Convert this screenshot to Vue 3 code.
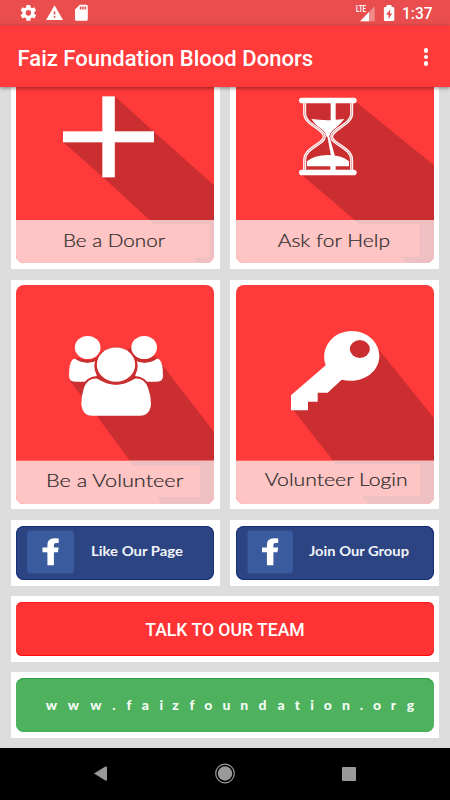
<template>
    <div class="screen">
        <div class="status-bar">
            <svg class="status-icons" viewBox="0 0 450 26">
                <g fill="#fff">
                    <path transform="translate(18.9 3.4) scale(.79)" d="M19.43 12.98c.04-.32.07-.64.07-.98s-.03-.66-.07-.98l2.11-1.65c.19-.15.24-.42.12-.64l-2-3.46c-.12-.22-.39-.3-.61-.22l-2.49 1c-.52-.4-1.08-.73-1.69-.98l-.38-2.65C14.46 2.18 14.25 2 14 2h-4c-.25 0-.46.18-.49.42l-.38 2.65c-.61.25-1.17.59-1.69.98l-2.49-1c-.23-.09-.49 0-.61.22l-2 3.46c-.13.22-.07.49.12.64l2.11 1.65c-.04.32-.07.65-.07.98s.03.66.07.98l-2.11 1.65c-.19.15-.24.42-.12.64l2 3.46c.12.22.39.3.61.22l2.49-1c.52.4 1.08.73 1.69.98l.38 2.65c.03.24.24.42.49.42h4c.25 0 .46-.18.49-.42l.38-2.65c.61-.25 1.17-.59 1.69-.98l2.49 1c.23.09.49 0 .61-.22l2-3.46c.12-.22.07-.49-.12-.64l-2.11-1.65zM12 15.5c-1.93 0-3.5-1.57-3.5-3.5s1.57-3.5 3.5-3.5 3.5 1.57 3.5 3.5-1.57 3.5-3.5 3.5z" />
                    <path transform="translate(45.3 3.8) scale(.77)" d="M1 21h22L12 2 1 21zm12-3h-2v-2h2v2zm0-4h-2v-4h2v4z" />
                    <path transform="translate(71.8 3.2) scale(.8)" d="M18 2h-8L4.020 8 4 20c0 1.100.9 2 2 2h12c1.100 0 2-.9 2-2V4c0-1.100-.9-2-2-2zm-6 6h-2V4h2v4zm3 0h-2V4h2v4zm3 0h-2V4h2v4z" />
                    <path opacity=".35" d="M374.700 6v15.200h-14.500z" />
                    <path d="M369 12.100v9.100h-8.900z" />
                    <path d="M386.500 5h5v2h1.500q1.300 0 1.300 1.300v11.500q0 1.300-1.300 1.300h-7.800q-1.300 0-1.300-1.300V8.300q0-1.300 1.300-1.300h1.300zM390.300 9.300l-4.200 5.400h2.500v4.200l3.600-5.500h-2.300z" fill-rule="evenodd" />
                </g>
                <text class="lte" x="356" y="12.300" textLength="10" lengthAdjust="spacingAndGlyphs">LTE</text>
                <text class="clock" x="402" y="19.300" textLength="30.500" lengthAdjust="spacingAndGlyphs">1:37</text>
            </svg>
        </div>

        <header class="app-bar">
            <h1>Faiz Foundation Blood Donors</h1>
            <button class="more" aria-label="More"><i></i><i></i><i></i></button>
        </header>

        <main class="content">
            <div class="grid tiles">
                <a v-for="tile in tiles" :key="tile.label" class="card">
                    <svg class="tile" :viewBox="tile.box" preserveAspectRatio="none">
                        <rect x="0" y="-130" width="700" height="830" fill="#ff3a3a" />
                        <polygon :points="tile.shadow" fill="#cb2e30" />

                        <g v-if="tile.icon === 'plus'" fill="#fff">
                            <rect x="307" y="34" width="37.500" height="243" />
                            <rect x="189" y="139" width="273" height="33" />
                        </g>

                        <g v-else-if="tile.icon === 'hourglass'">
                            <path d="M240 52H379V88C379 120 318 138 318 155C318 172 379 188 379 222V258H240V222C240 188 300 172 300 155C300 138 240 120 240 88Z" fill="#cb2e30" />
                            <path d="M239 52V86C239 118 298 132 298 155C298 177 239 188 239 224V258M380 52V86C380 118 320 132 320 155C320 177 380 188 380 224V258" fill="none" stroke="#fff" stroke-width="9" />
                            <path d="M239 52V86C239 118 298 132 298 155C298 177 239 188 239 224V258M380 52V86C380 118 320 132 320 155C320 177 380 188 380 224V258" fill="none" stroke="#e0696b" stroke-width="2" />
                            <g fill="#fff">
                                <path d="M317 52h15v54h-15zM259 102Q307 109 358 102Q340 124 325 134Q315 144 311 156H305Q303 143 293 134Q272 122 259 102Z" />
                                <path d="M307 154h6L330 213H318ZM246 244V229Q270 210 309 210Q350 210 372 229V244ZM316 242h16v16h-16z" />
                                <rect x="222" y="38" width="173" height="17" rx="8.500" />
                                <rect x="222" y="254" width="173" height="17" rx="8.500" />
                            </g>
                        </g>

                        <g v-else-if="tile.icon === 'people'">
                            <g fill="#fff">
                                <path d="M229 252Q263 270 290 256V306Q268 310 257 320H225Q207 320 207 303Q207 264 217 254Q222 249 229 252Z" />
                                <path d="M467 252Q433 270 406 256V306Q428 310 439 320H471Q489 320 489 303Q489 264 479 254Q474 249 467 252Z" />
                            </g>
                            <path d="M230 251Q263 268 294 250M466 251Q433 268 402 250" fill="none" stroke="#cb2e30" stroke-width="8" />
                            <path d="M248 340Q261 307 293 307Q348 347 403 307Q435 307 448 340" fill="none" stroke="#cb2e30" stroke-width="8" />
                            <g fill="#fff">
                                <ellipse cx="263" cy="217.500" rx="38.500" ry="34.500" />
                                <ellipse cx="432.500" cy="217.500" rx="38.500" ry="34.500" />
                                <path d="M292 311Q348 346 404 311Q432 308 444 338Q453 362 453 387Q450 422 420 422H276Q247 422 244 387Q244 362 252 338Q264 308 292 311Z" />
                                <ellipse cx="348" cy="273" rx="65" ry="56" fill="#cb2e30" />
                                <ellipse cx="348" cy="269" rx="57.500" ry="51.500" />
                            </g>
                        </g>

                        <g v-else>
                            <path d="M380 168C426 168 463 201 463 243C463 292 411 329 350 314L308 353H278V380H249V406H198V361L302 271C284 217 325 168 380 168Z" fill="#fff" />
                            <ellipse cx="404.500" cy="222" rx="30" ry="27" fill="#cb2e30" />
                        </g>

                        <!-- caption strip, the long shadow shows faintly through its edges -->
                        <rect x="0" :y="tile.strip" width="700" height="150" fill="#ffc4c4" />
                        <polygon :points="tile.ghost" fill="#eec0c1" />
                        <text class="caption" :x="tile.textX" :y="tile.textY" :textLength="tile.textWidth" lengthAdjust="spacingAndGlyphs">{{ tile.label }}</text>
                    </svg>
                </a>
            </div>

            <div class="grid social">
                <a v-for="link in links" :key="link.label" class="card">
                    <svg class="facebook" viewBox="0 0 198 54">
                        <rect :x="link.logoX" y="4.500" :width="link.logoWidth" height="43" rx="3" fill="#3b5b9f" />
                        <path :transform="`translate(${link.fX} 12.300)`" d="M16.200 .2V4.600H13.300Q11.400 4.600 11.400 6.700V9.300H16.200L15.400 14H11.400V27H4.900V14H0V9.300H4.900V6.600Q4.900 0 11.800 0Q14.300 0 16.200 .2Z" fill="#fff" />
                        <text class="link-label" :x="link.textX" :y="link.textY" :textLength="link.textWidth" lengthAdjust="spacingAndGlyphs">{{ link.label }}</text>
                    </svg>
                </a>
            </div>

            <div class="card wide">
                <button class="talk">TALK TO OUR TEAM</button>
            </div>

            <div class="card wide">
                <a class="site">
                    <svg viewBox="0 0 418 54">
                        <text class="url" v-for="(char, index) in url" :key="index" :x="urlX[index]" y="31.500">{{ char }}</text>
                    </svg>
                </a>
            </div>
        </main>

        <nav class="nav-bar">
            <svg viewBox="0 0 450 52">
                <path d="M94 25.500L105 18.800Q107 17.700 107 19.500V31.500Q107 33.500 105 32.300Z" fill="#999" />
                <circle cx="225" cy="25.500" r="9.300" fill="none" stroke="#999" stroke-width="1.200" />
                <circle cx="225" cy="25.500" r="7.200" fill="#999" />
                <rect x="342" y="19" width="14" height="14" rx=".8" fill="#999" />
            </svg>
        </nav>
    </div>
</template>

<script setup>
import { ref } from 'vue';

const tiles = ref([
    {
        label: 'Be a Donor',
        icon: 'plus',
        box: '48 -123 594 657',
        shadow: '344,33 462,140 642,301 642,405 449,405 308,276 189,171 326,150',
        strip: 405,
        ghost: '449,405 642,405 642,534 595,534 578,518 628,518 628,417 462,417',
        textX: 189,
        textY: 486,
        textWidth: 306
    },
    {
        label: 'Ask for Help',
        icon: 'hourglass',
        box: '33 -123 594 657',
        shadow: '392,50 627,241 627,405 389,405 228,268 309,155',
        strip: 405,
        ghost: '389,405 627,405 627,534 543,534 524,515 584,515 584,417 402,417',
        textX: 158,
        textY: 486,
        textWidth: 337
    },
    {
        label: 'Be a Volunteer',
        icon: 'people',
        box: '48 30 594 657',
        shadow: '375,230 395,215 467,245 489,272 642,471 642,558 390,558 290,422 210,318',
        strip: 557,
        ghost: '390,557 642,557 642,687 486,687 471,666 600,666 600,573 401,573',
        textX: 138,
        textY: 635,
        textWidth: 412
    },
    {
        label: 'Volunteer Login',
        icon: 'key',
        box: '33 30 594 657',
        shadow: '462,225 627,429 627,558 325,558 205,405 350,300',
        strip: 557,
        ghost: '325,557 627,557 627,687 430,687 411,663 586,663 586,568 334,568',
        textX: 119,
        textY: 633,
        textWidth: 429
    }
]);

const links = ref([
    { label: 'Like Our Page', logoX: 11, logoWidth: 47, fX: 26.5, textX: 75, textY: 29.5, textWidth: 92 },
    { label: 'Join Our Group', logoX: 11.5, logoWidth: 45.5, fX: 26, textX: 73, textY: 30, textWidth: 100 }
]);

const url = 'www.faizfoundation.org';
// centre of every letter along the button
const urlX = [35.3, 57.5, 79.8, 98, 113, 129.3, 145.3, 159.5, 176, 192.3, 210.5, 228.3, 246.5, 265, 281.5, 296, 311.7, 330, 345.5, 361, 377.5, 394.5];
</script>

<style>
body {
    margin: 0;
}
</style>

<style scoped>
.screen {
    width: 450px;
    height: 800px;
    display: flex;
    flex-direction: column;
    overflow: hidden;
    background-color: #ddd;
    font-family: Roboto, "Liberation Sans", sans-serif;
}

.status-bar {
    height: 26px;
    background-color: #e94d4d;
}

.status-icons {
    display: block;
    width: 450px;
    height: 26px;
}

.lte {
    font-size: 9px;
    font-weight: 700;
    fill: #fff;
}

.clock {
    font-size: 16px;
    font-weight: 500;
    fill: #fff;
}

.app-bar {
    height: 61px;
    flex-shrink: 0;
    display: flex;
    align-items: center;
    justify-content: space-between;
    padding: 0 20px 0 17.5px;
    box-sizing: border-box;
    background-color: #ff3a3a;
    box-shadow: 0 1px 4px rgba(0, 0, 0, 0.45);
    z-index: 1;
}

.app-bar h1 {
    margin: 4px 0 0;
    color: #fff;
    font-size: 22px;
    font-weight: 500;
    line-height: 28px;
    letter-spacing: 0.02px;
    white-space: nowrap;
}

.more {
    display: flex;
    flex-direction: column;
    gap: 2.300px;
    padding: 0;
    margin-top: 1px;
    margin-right: 2px;
    border: none;
    background: none;
}

.more i {
    width: 4.400px;
    height: 4.400px;
    border-radius: 50%;
    background-color: #fff;
}

.content {
    flex: 1;
    min-height: 0;
    overflow: hidden;
    padding: 0 11px;
}

.grid {
    display: grid;
    grid-template-columns: 209px 209px;
    gap: 11px 10px;
}

/* the list is scrolled under the app bar */
.tiles {
    margin-top: -47px;
}

.social {
    margin-top: 11px;
}

.card {
    display: block;
    box-sizing: border-box;
    padding: 5px 6px 5px 5px;
    background-color: #fff;
}

.grid .card:nth-child(2n) {
    padding: 5px 5px 5px 6px;
}

.tiles .card {
    height: 229px;
}

.tiles .card:nth-child(-n + 2) {
    padding-top: 4px;
}

.tile {
    display: block;
    width: 198px;
    height: 219px;
    border-radius: 8px;
}

.caption {
    font-family: Lato, sans-serif;
    font-size: 52px;
    font-weight: 300;
    fill: #2b2b2b;
    stroke: #2b2b2b;
    stroke-width: 0.6px;
}

.social .card {
    height: 66px;
    padding-top: 6px;
}

.social .card:nth-child(2n) {
    padding-top: 6px;
}

.facebook {
    display: block;
    width: 198px;
    height: 54px;
    border-radius: 8px;
    background-color: #2d4482;
    box-shadow: inset 0 0 0 1px #15307a;
}

.link-label {
    font-family: Lato, sans-serif;
    font-size: 13.500px;
    font-weight: 700;
    fill: #f2f4fa;
}

.wide {
    height: 66px;
    margin-top: 10px;
    padding: 6px 5px;
}

.talk {
    display: block;
    width: 418px;
    height: 54px;
    padding: 1px 0 0;
    border: none;
    border-radius: 6px;
    background-color: #ff3234;
    box-shadow: inset 0 -1px #ff0a0a, inset 0 1px #ff1a1a;
    color: #fff;
    font-family: Roboto, sans-serif;
    font-size: 17.600px;
    font-weight: 500;
}

.site {
    display: block;
    height: 54px;
    border-radius: 8px;
    background-color: #4db15e;
    box-shadow: inset 0 1px #2ba043, inset 0 -1px #3fb057;
}

.site svg {
    display: block;
    width: 418px;
    height: 54px;
}

.url {
    font-family: Lato, sans-serif;
    font-size: 14px;
    font-weight: 900;
    fill: #f4fbf5;
    text-anchor: middle;
}

.nav-bar {
    height: 52px;
    flex-shrink: 0;
    background-color: #000;
}

.nav-bar svg {
    display: block;
    width: 450px;
    height: 52px;
}
</style>
